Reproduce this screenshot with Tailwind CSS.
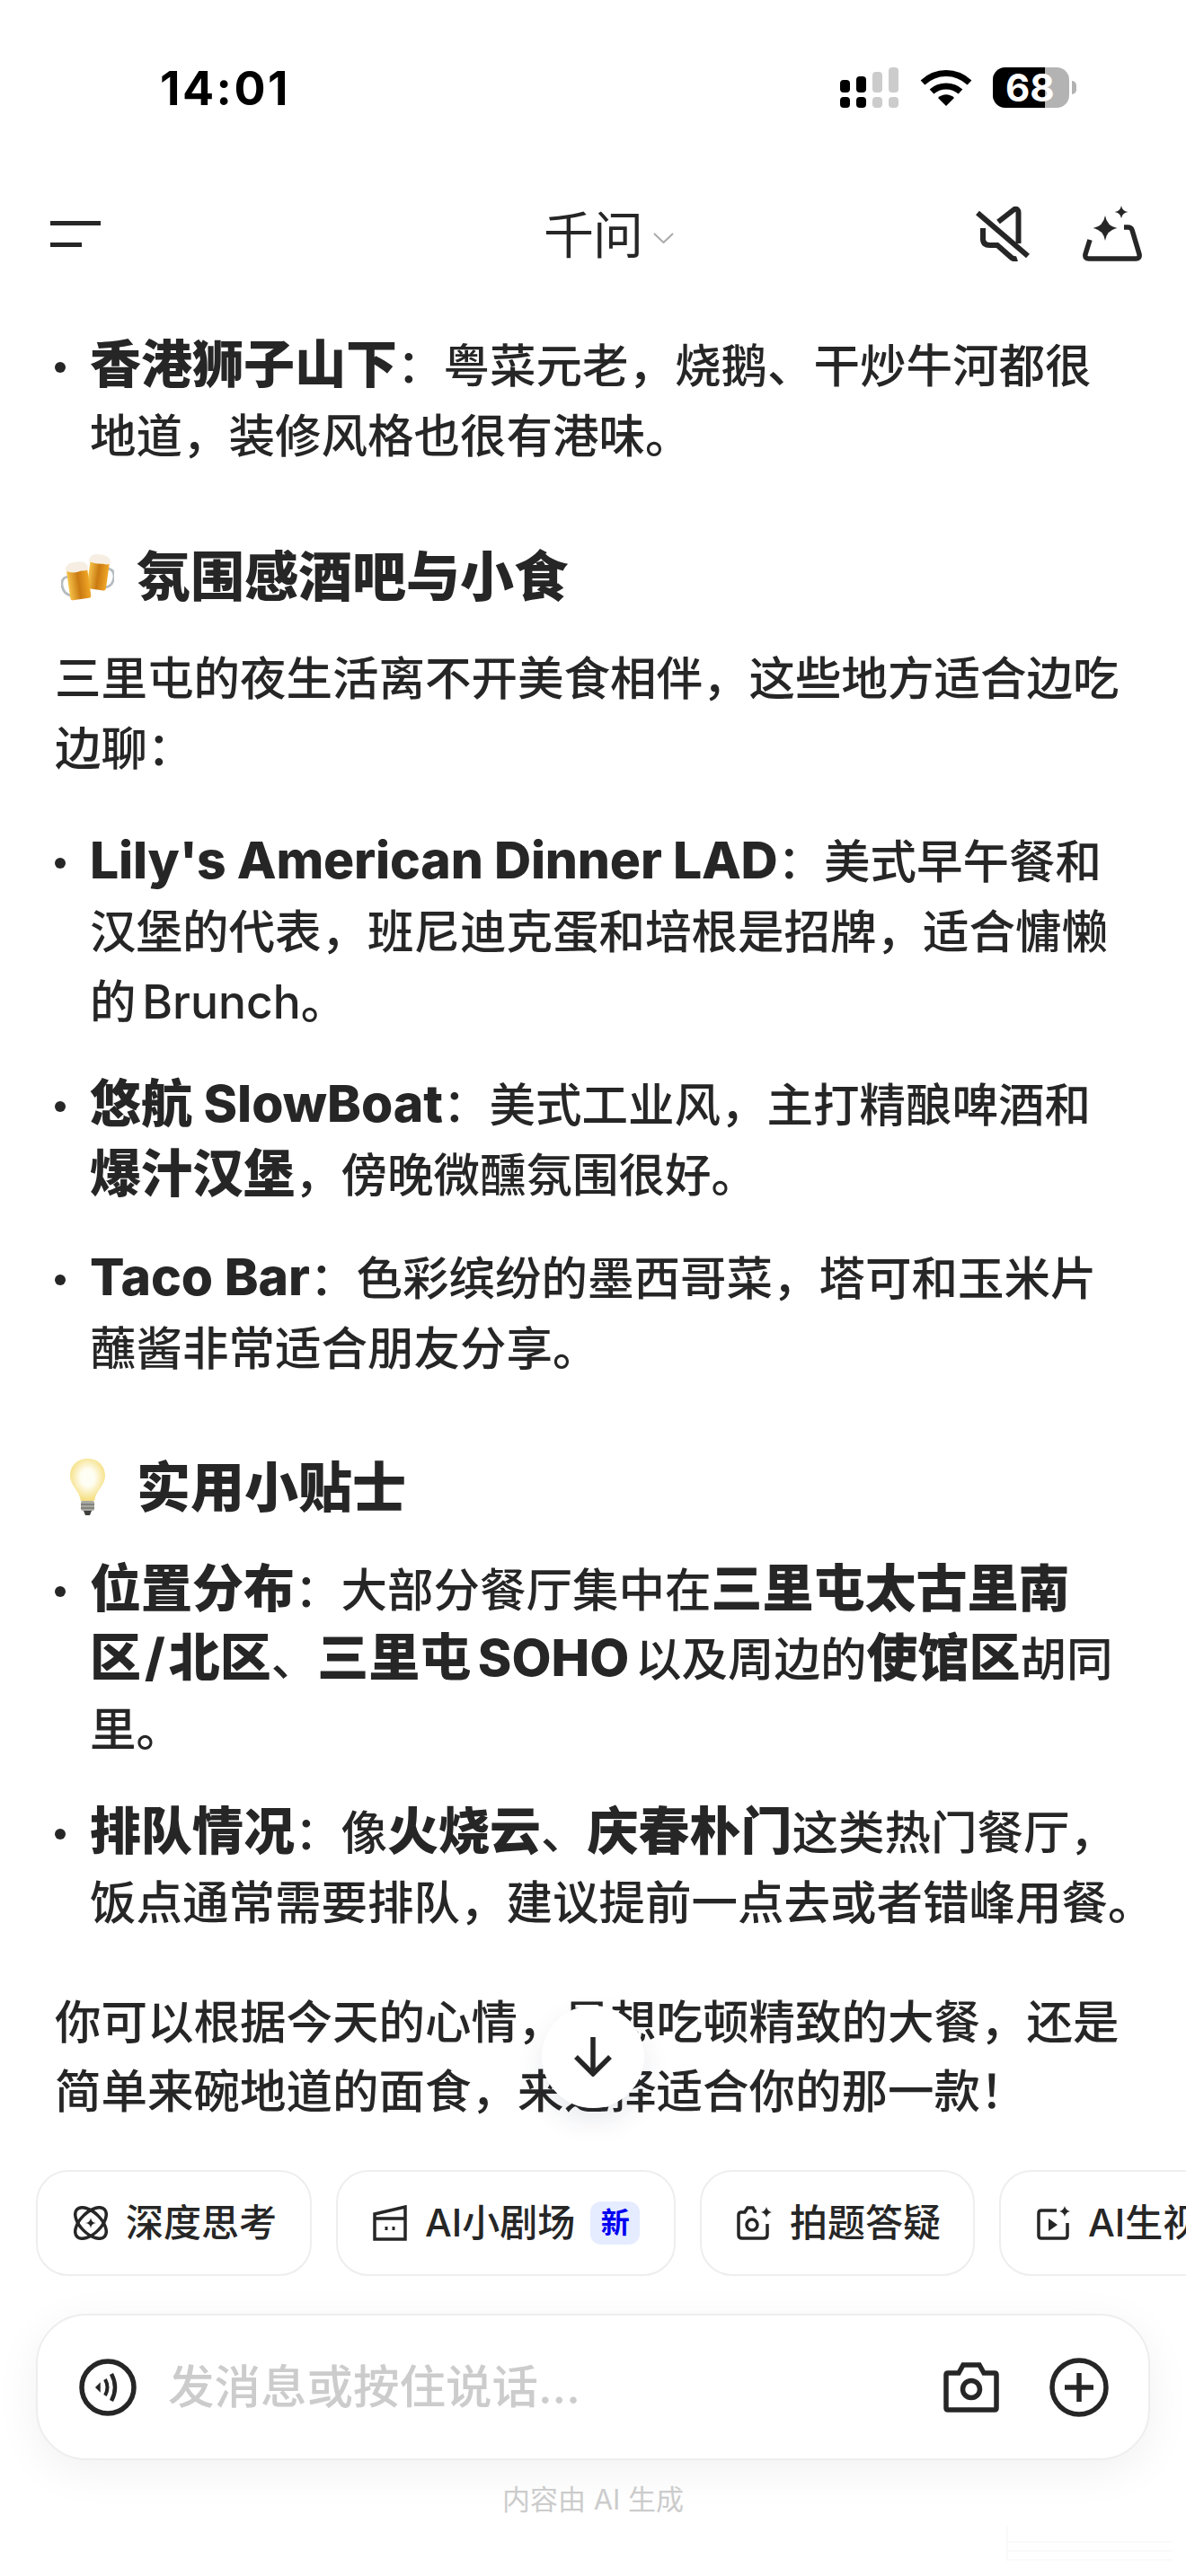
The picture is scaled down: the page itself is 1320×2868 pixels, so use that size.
<!DOCTYPE html>
<html lang="zh-CN">
<head>
    <meta charset="UTF-8">
    <meta name="viewport" content="width=device-width, initial-scale=1.0">
    <title>千问</title>
    <script src="https://cdn.jsdelivr.net/npm/@tailwindcss/browser@4"></script>
</head>
<body class="bg-white">
    <div class="relative w-[1320px] h-[2868px] overflow-hidden bg-white text-[#262626] font-['Inter','Noto_Sans_CJK_SC',sans-serif]">

        <!-- status bar -->
        <div class="h-[196px] flex items-start justify-between pt-[75px] pl-[178px] pr-[122px]">
            <div class="text-[52px] leading-[48px] font-bold text-black tracking-[2.5px]">14:01</div>
            <div class="flex items-start">
                <svg class="w-[66px] h-[46px]" viewBox="0 0 66 46">
                    <rect x="0" y="14" width="11" height="14" rx="4" fill="#000"/>
                    <rect x="0" y="33" width="11" height="12" rx="4" fill="#000"/>
                    <rect x="18" y="10" width="11" height="18" rx="4" fill="#000"/>
                    <rect x="18" y="33" width="11" height="12" rx="4" fill="#000"/>
                    <rect x="36" y="5" width="11" height="23" rx="4" fill="#ccc"/>
                    <rect x="36" y="33" width="11" height="12" rx="4" fill="#ccc"/>
                    <rect x="54" y="0" width="11" height="28" rx="4" fill="#ccc"/>
                    <rect x="54" y="33" width="11" height="12" rx="4" fill="#ccc"/>
                </svg>
                <svg class="ml-[23px] mt-[2px] w-[58px] h-[42px]" viewBox="0 0 58 42">
                    <path d="M3 15 C18 1 40 1 55 15" fill="none" stroke="#000" stroke-width="7"/>
                    <path d="M13 25 C22 17 36 17 45 25" fill="none" stroke="#000" stroke-width="7"/>
                    <path d="M20 32 C25 27 33 27 38 32 L29 41 Z" fill="#000"/>
                </svg>
                <div class="relative ml-[23px] w-[85px] h-[45px] rounded-[14px] bg-[#b3b3b3]">
                    <div class="h-full w-[58px] rounded-l-[14px] bg-black"></div>
                    <div class="absolute inset-0 pl-[14px] flex items-center text-[42px] leading-none font-bold text-white">68</div>
                </div>
                <div class="ml-[3px] mt-[15px] w-[5px] h-[15px] rounded-r-full bg-[#b3b3b3]"></div>
            </div>
        </div>

        <!-- header -->
        <div class="relative h-[128px] flex items-center justify-between pl-[56px] pr-[49px]">
            <div class="flex flex-col gap-[19px]">
                <div class="w-[56px] h-[5px] bg-[#262626]"></div>
                <div class="w-[35px] h-[5px] bg-[#262626]"></div>
            </div>
            <div class="absolute left-[605px] top-[36px] flex items-center">
                <span class="text-[56px] leading-[60px] tracking-[-1px]">千问</span>
                <svg class="ml-[12px] mt-[6px] w-[23px] h-[12px]" viewBox="0 0 23 12"><path d="M1 1 L11.5 11 L22 1" fill="none" stroke="#aaa" stroke-width="2"/></svg>
            </div>
            <div class="flex items-center gap-[57px]">
                <svg class="w-[62px] h-[62px]" viewBox="0 0 62 62" fill="none" stroke="#262626" stroke-width="6">
                    <path d="M25 18 L43 4 Q47.5 3 47.5 8 L47.5 42"/>
                    <path d="M2 8 L58 56"/>
                    <path d="M8 25 L8 37 Q8 44 16 44 L24 44 L40 58 Q43 60 46 59"/>
                </svg>
                <svg class="w-[66px] h-[64px]" viewBox="0 0 66 64">
                    <path d="M8 39 L3 55 Q2 60 7 60 L59 60 Q64 60 63 55 L55 28 Q54 25 50 25 L46 25" fill="none" stroke="#262626" stroke-width="5.5"/>
                    <path d="M25 12 Q27 24 38.5 26 Q27 28 25 40 Q23 28 11.500 26 Q23 24 25 12 Z" fill="#262626"/>
                    <path d="M43 1 Q44 7 50.500 8 Q44 9 43 15 Q42 9 35.500 8 Q42 7 43 1 Z" fill="#262626"/>
                </svg>
            </div>
        </div>

        <!-- answer -->
        <div class="pl-[61px] whitespace-nowrap text-[51.5px] leading-[77.6px] font-medium [&_b]:leading-none [&_b]:text-[57px] [&_b]:font-extrabold">
            <ul class="pt-[45px]">
                <li class="flex">
                    <span class="mt-[34px] mr-[27px] w-[12px] h-[12px] rounded-full bg-[#262626] shrink-0"></span>
                    <div><b>香港狮子山下</b>：粤菜元老，烧鹅、干炒牛河都很<br>地道，装修风格也很有港味。</div>
                </li>
            </ul>

            <h2 class="mt-[79px] flex items-center text-[60px] font-extrabold leading-[78px]">
                <svg class="ml-[7px] w-[59px] h-[55px] mr-[25px]" viewBox="0 0 66 60">
                    <defs>
                        <linearGradient id="beer" x1="0" y1="0" x2="1" y2="0"><stop offset="0" stop-color="#f6c34a"/><stop offset="0.5" stop-color="#c97a12"/><stop offset="1" stop-color="#f0a726"/></linearGradient>
                    </defs>
                    <g transform="rotate(8 48 28)">
                        <path d="M56 18 Q66 18 66 28 Q66 40 56 42" fill="none" stroke="#b5bcc0" stroke-width="3"/>
                        <rect x="34" y="10" width="24" height="36" rx="3" fill="url(#beer)"/>
                        <path d="M32 12 Q32 2 44 2 Q58 1 59 10 Q59 14 50 13 Q40 15 32 12 Z" fill="#f6eee2"/>
                    </g>
                    <g transform="rotate(-8 20 38)">
                        <path d="M10 28 Q1 28 1 38 Q1 48 10 52" fill="none" stroke="#b5bcc0" stroke-width="3"/>
                        <rect x="9" y="20" width="26" height="38" rx="3" fill="url(#beer)"/>
                        <path d="M8 20 Q8 11 21 11 Q36 11 36 20 Q36 25 27 23 Q16 26 8 20 Z" fill="#f6eee2"/>
                    </g>
                </svg>
                氛围感酒吧与小食
            </h2>
            <p class="mt-[36px]">三里屯的夜生活离不开美食相伴，这些地方适合边吃<br>边聊：</p>

            <ul class="mt-[49px] flex flex-col gap-[38px]">
                <li class="flex">
                    <span class="mt-[34px] mr-[27px] w-[12px] h-[12px] rounded-full bg-[#262626] shrink-0"></span>
                    <div><b class="tracking-[-0.2px]">Lily's American Dinner LAD</b>：美式早午餐和<br>汉堡的代表，班尼迪克蛋和培根是招牌，适合慵懒<br><span class="[word-spacing:-7px]">的 Brunch。</span></div>
                </li>
                <li class="flex">
                    <span class="mt-[34px] mr-[27px] w-[12px] h-[12px] rounded-full bg-[#262626] shrink-0"></span>
                    <div><b>悠航 SlowBoat</b>：美式工业风，主打精酿啤酒和<br><b>爆汁汉堡</b>，傍晚微醺氛围很好。</div>
                </li>
                <li class="flex">
                    <span class="mt-[34px] mr-[27px] w-[12px] h-[12px] rounded-full bg-[#262626] shrink-0"></span>
                    <div><b>Taco Bar</b>：色彩缤纷的墨西哥菜，塔可和玉米片<br>蘸酱非常适合朋友分享。</div>
                </li>
            </ul>

            <h2 class="mt-[76px] flex items-center text-[60px] font-extrabold leading-[78px]">
                <svg class="ml-[7px] w-[59px] h-[66px] mr-[25px]" viewBox="0 0 59 66">
                    <defs>
                        <radialGradient id="bulb" cx="0.5" cy="0.45" r="0.55"><stop offset="0.35" stop-color="#fffef4"/><stop offset="1" stop-color="#f5de7c"/></radialGradient>
                    </defs>
                    <path d="M29.500 1 C16 1 10 11 10 20 C10 31 20 36 22 48 L37 48 C39 36 49 31 49 20 C49 11 43 1 29.500 1 Z" fill="url(#bulb)"/>
                    <rect x="22" y="48" width="15" height="11" rx="2" fill="#a9a9a4"/>
                    <path d="M22 52 H37 M22 56 H37" stroke="#77776f" stroke-width="1.500"/>
                    <path d="M25 59 H34 L32 64 H27 Z" fill="#3f3f3c"/>
                </svg>
                实用小贴士
            </h2>

            <ul class="mt-[37px] flex flex-col gap-[38px]">
                <li class="flex">
                    <span class="mt-[34px] mr-[27px] w-[12px] h-[12px] rounded-full bg-[#262626] shrink-0"></span>
                    <div><b>位置分布</b>：大部分餐厅集中在<b>三里屯太古里南</b><br><b>区<span class="mx-[4px]">/</span>北区</b>、<b class="[word-spacing:-5px]">三里屯 SOHO</b><span class="[word-spacing:-7px]"> 以及周边的</span><b>使馆区</b>胡同<br>里。</div>
                </li>
                <li class="flex">
                    <span class="mt-[34px] mr-[27px] w-[12px] h-[12px] rounded-full bg-[#262626] shrink-0"></span>
                    <div><b>排队情况</b>：像<b>火烧云</b>、<b>庆春朴门</b>这类热门餐厅，<br>饭点通常需要排队，建议提前一点去或者错峰用餐。</div>
                </li>
            </ul>

            <p class="mt-[55px]">你可以根据今天的心情，是想吃顿精致的大餐，还是<br>简单来碗地道的面食，来选择适合你的那一款！</p>
        </div>

        <!-- scroll to bottom -->
        <div class="absolute left-[603px] top-[2233px] w-[114px] h-[114px] rounded-full bg-white shadow-[0_14px_30px_rgba(40,50,90,0.10)] flex items-center justify-center">
            <svg class="w-[42px] h-[44px]" viewBox="0 0 42 44" fill="none" stroke="#262626" stroke-width="5.500"><path d="M21 0 V41"/><path d="M2 22 L21 41 L40 22"/></svg>
        </div>

        <!-- bottom bar -->
        <div class="absolute left-0 right-0 bottom-0">
            <div class="flex gap-[27px] pl-[40px] whitespace-nowrap text-[42px] leading-none font-medium">
                <div class="shrink-0 h-[118px] w-[307px] pl-[40px] flex items-center gap-[20px] rounded-[36px] border-2 border-[#eeeeee]">
                    <svg class="w-[38px] h-[38px]" viewBox="0 0 38 38" fill="none" stroke="#262626" stroke-width="3.500">
                        <ellipse cx="19" cy="19" rx="21.500" ry="11.500" transform="rotate(45 19 19)"/>
                        <ellipse cx="19" cy="19" rx="21.500" ry="11.500" transform="rotate(-45 19 19)"/>
                        <path d="M19 13 Q19.500 18.500 25 19 Q19.500 19.500 19 25 Q18.500 19.500 13 19 Q18.500 18.500 19 13 Z" fill="#262626" stroke="none"/>
                    </svg>
                    <span>深度思考</span>
                </div>
                <div class="shrink-0 h-[118px] w-[378px] pl-[39px] flex items-center rounded-[36px] border-2 border-[#eeeeee]">
                    <svg class="w-[38px] h-[40px] mr-[20px]" viewBox="0 0 38 40" fill="none" stroke="#262626" stroke-width="3.500">
                        <path d="M2 10 L36 2 V38 H2 Z M2 15 H36"/>
                        <path d="M15 24 V28 M23 24 V28" stroke-width="3"/>
                    </svg>
                    <span>AI小剧场</span>
                    <span class="ml-[17px] w-[55px] h-[48px] rounded-[12px] bg-[#e6ecff] flex items-center justify-center text-[32px] font-bold text-[#0000f0]">新</span>
                </div>
                <div class="shrink-0 h-[118px] w-[306px] pl-[39px] flex items-center rounded-[36px] border-2 border-[#eeeeee]">
                    <svg class="w-[40px] h-[38px] mr-[19px]" viewBox="0 0 40 38" fill="none" stroke="#262626" stroke-width="3.500">
                        <path d="M22 6 H20 L18 2 H12 L9 7 H5 Q2 7 2 10 V32 Q2 36 6 36 H30 Q34 36 34 32 V20"/>
                        <circle cx="17" cy="21" r="6"/>
                        <path d="M33 1 Q34 6 39 7 Q34 8 33 13 Q32 8 27 7 Q32 6 33 1 Z" fill="#262626" stroke="none"/>
                    </svg>
                    <span>拍题答疑</span>
                </div>
                <div class="shrink-0 h-[118px] w-[306px] pl-[40px] flex items-center rounded-[36px] border-2 border-[#eeeeee]">
                    <svg class="w-[38px] h-[38px] mr-[19px]" viewBox="0 0 38 38" fill="none" stroke="#262626" stroke-width="3.500">
                        <path d="M22 5 H5 Q2 5 2 8 V33 Q2 36 5 36 H31 Q34 36 34 33 V19"/>
                        <path d="M13 14 L23 21 L13 28 Z" fill="#262626" stroke="none"/>
                        <path d="M31 0 Q32 5 37 6 Q32 7 31 12 Q30 7 25 6 Q30 5 31 0 Z" fill="#262626" stroke="none"/>
                    </svg>
                    <span>AI生视频</span>
                </div>
            </div>

            <div class="mt-[42px] mx-[40px] h-[163px] rounded-[56px] border-2 border-[#eeeeee] bg-white shadow-[0_12px_50px_rgba(0,0,0,0.06)] pl-[46px] pr-[44px] flex items-center">
                <svg class="w-[64px] h-[64px] mr-[35px]" viewBox="0 0 64 64" fill="none" stroke="#262626">
                    <circle cx="32" cy="32" r="29" stroke-width="5.500"/>
                    <path d="M19 32 L23 28 L23 36 Z" fill="#262626" stroke-width="1.500"/>
                    <path d="M29 23 Q34 32 29 41" stroke-width="4"/>
                    <path d="M36 17 Q44 32 36 47" stroke-width="4.500"/>
                </svg>
                <span class="text-[51.5px] leading-none font-medium text-[#cccccc]">发消息或按住说话...</span>
                <svg class="ml-auto w-[62px] h-[56px]" viewBox="0 0 62 56" fill="none" stroke="#262626" stroke-width="5.500">
                    <path d="M5 12 H17 L22 3 H40 L45 12 H57 Q59 12 59 14 V51 Q59 53 57 53 H5 Q3 53 3 51 V14 Q3 12 5 12 Z"/>
                    <circle cx="31" cy="30" r="9.500"/>
                </svg>
                <svg class="ml-[56px] w-[66px] h-[66px]" viewBox="0 0 66 66" fill="none" stroke="#262626">
                    <circle cx="33" cy="33" r="30" stroke-width="5.500"/>
                    <path d="M17 33 H49 M33 17 V49" stroke-width="5.500"/>
                </svg>
            </div>

            <div class="h-[129px] pt-[26px] text-center text-[31px] leading-[36px] text-[#cccccc]">内容由 AI 生成</div>
        </div>

        <!-- faint watermark, bottom right -->
        <div class="absolute left-[1120px] top-[2813px] w-[185px] h-[38px] border-l-2 border-[#f9f9f9] flex flex-col justify-end gap-[8px]">
            <div class="h-[2px] bg-[#fafafa]"></div>
            <div class="h-[2px] bg-[#fafafa]"></div>
            <div class="h-[2px] bg-[#fafafa]"></div>
        </div>
    </div>
</body>
</html>
